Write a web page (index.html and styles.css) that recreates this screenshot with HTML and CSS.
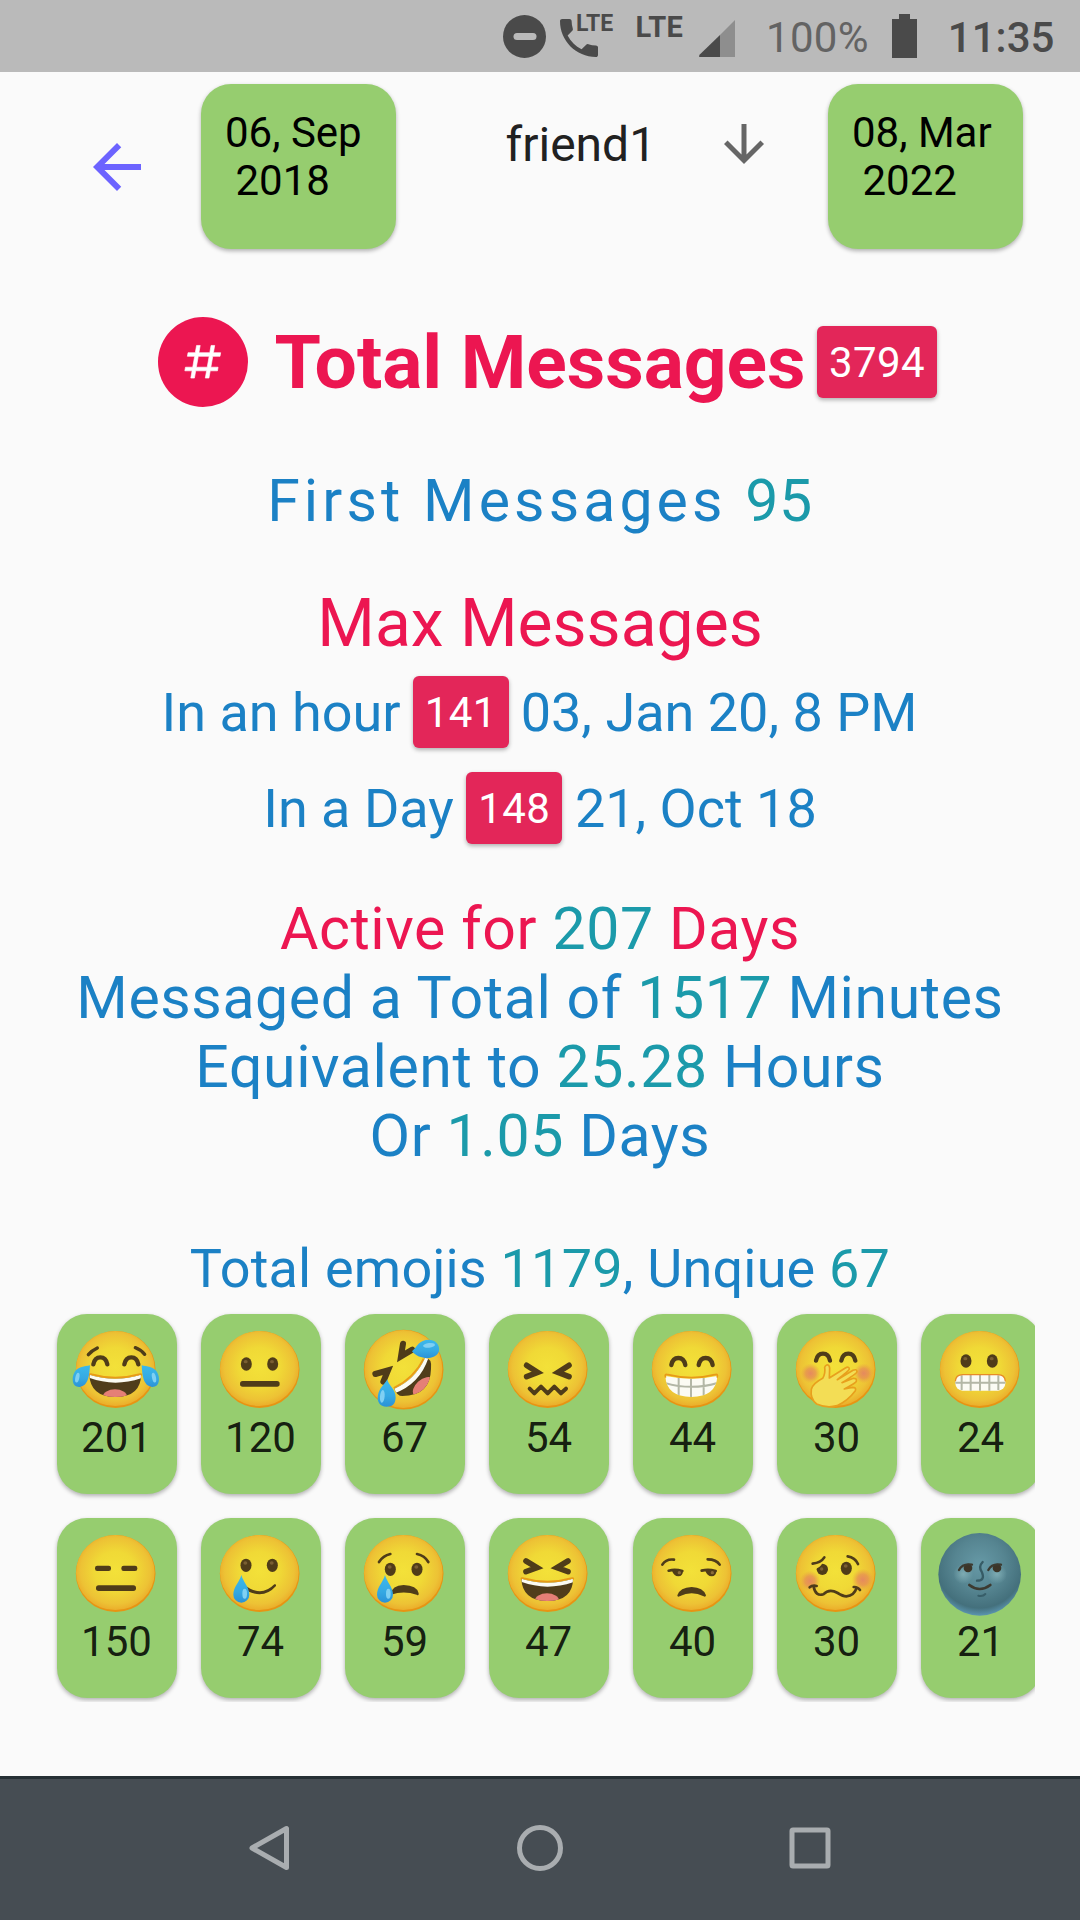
FILE: index.html
```html
<!DOCTYPE html>
<html lang="en">
<head>
<meta charset="utf-8">
<title>Chat statistics</title>
<link rel="stylesheet" href="styles.css">
</head>
<body>
<svg class="defs" width="0" height="0" aria-hidden="true">
  <defs>
    <radialGradient id="skin" cx=".5" cy=".48" r=".52">
      <stop offset="0" stop-color="#f3e139"/><stop offset=".5" stop-color="#f0d936"/><stop offset=".85" stop-color="#edc235"/><stop offset="1" stop-color="#ebae2b"/>
    </radialGradient>
    <radialGradient id="blush"><stop offset="0" stop-color="#e58661" stop-opacity=".95"/><stop offset=".5" stop-color="#e68a55" stop-opacity=".7"/><stop offset="1" stop-color="#e9a040" stop-opacity="0"/></radialGradient>
    <radialGradient id="moon" cx=".5" cy=".38" r=".62"><stop offset="0" stop-color="#6699a6"/><stop offset=".5" stop-color="#568591"/><stop offset=".85" stop-color="#44707c"/><stop offset="1" stop-color="#5b95b0"/></radialGradient>
    <radialGradient id="glow"><stop offset="0" stop-color="#86b4ba" stop-opacity=".8"/><stop offset="1" stop-color="#86b4ba" stop-opacity="0"/></radialGradient>
    <linearGradient id="water" x1="0" y1="0" x2="0" y2="1"><stop offset="0" stop-color="#3bb9ec"/><stop offset=".6" stop-color="#35a9e3"/><stop offset="1" stop-color="#2a92d8"/></linearGradient>
    <clipPath id="laughClip"><path d="M97 182Q175 206 252 182Q252 248 175 249Q100 248 97 182Z"/></clipPath>
    <clipPath id="rollClip"><path d="M148 224Q210 198 240 132Q262 132 258 165Q256 246 172 246Q156 246 148 224Z"/></clipPath>
    <clipPath id="grinClip"><path d="M97 186Q176 202 253 186Q250 248 175 249Q100 248 97 186Z"/></clipPath>
    <g id="face"><ellipse cx="176" cy="166.500" rx="119.500" ry="115.500" fill="#e79413"/><ellipse cx="175" cy="163.500" rx="118" ry="112.500" fill="url(#skin)"/></g>
    <g id="eye"><ellipse rx="16.500" ry="20" fill="#4f3c19"/><ellipse cx="-2" cy="-7" rx="6" ry="5" fill="#7a5f33"/></g>
    <path id="happyEye" d="M-21 12Q-17 -9 0 -9Q17 -9 21 12" fill="none" stroke="#4f3c19" stroke-width="13" stroke-linecap="round"/>
    <g id="drop"><path d="M0 0C-5 20-24 36-24 59A24 24 0 0 0 24 59C24 36 5 20 0 0Z" fill="url(#water)"/><ellipse cx="10" cy="56" rx="7" ry="15" fill="#7fd0f3"/></g>
    <g id="laugh">
      <path d="M97 182Q175 206 252 182Q252 248 175 249Q100 248 97 182Z" fill="#503d1b"/>
      <g clip-path="url(#laughClip)"><path d="M92 175H260V190Q175 222 92 190Z" fill="#fbfbf3"/><ellipse cx="174" cy="247" rx="36" ry="21" fill="#e57f76"/></g>
      <path d="M97 183Q97 178 105 181Q175 201 245 181Q253 178 253 183" fill="none" stroke="#e89a17" stroke-width="5" stroke-linecap="round"/>
    </g>
  </defs>
</svg>

<header class="status">
  <svg class="dnd" viewBox="0 0 43 43"><circle cx="21.500" cy="21.500" r="21.500" fill="#4a4a4a"/><rect x="10.500" y="18" width="23" height="7" rx="3.500" fill="#bababa"/></svg>
  <span class="call"><svg class="phone" viewBox="3 3 18 18"><path fill="#4a4a4a" d="M6.620 10.790c1.440 2.830 3.760 5.140 6.590 6.590l2.200-2.200c.27-.27.67-.36 1.020-.24 1.120.37 2.330.57 3.570.57.55 0 1 .45 1 1V20c0 .55-.45 1-1 1-9.390 0-17-7.610-17-17 0-.55.45-1 1-1h3.500c.55 0 1 .45 1 1 0 1.250.2 2.450.57 3.570.11.35.03.74-.25 1.020l-2.200 2.200z"/></svg><b class="lte-small">LTE</b></span>
  <b class="lte">LTE</b>
  <svg class="signal" viewBox="0 0 36 37"><path d="M36 0V37H21V15Z" fill="#8e8e8e"/><path d="M21 15V37H1.500Q-1 37 .8 34.500Z" fill="#4a4a4a"/></svg>
  <span class="percent">100%</span>
  <svg class="battery" viewBox="0 0 25 44"><path d="M7 0H18V5H25V44H0V5H7Z" fill="#4a4a4a"/></svg>
  <time class="clock">11:35</time>
</header>

<main>
  <div class="toolbar">
    <svg class="back" viewBox="0 0 24 24"><path fill="#6c63ff" d="M20 11H7.830l5.590-5.590L12 4l-8 8 8 8 1.410-1.410L7.830 13H20v-2z"/></svg>
    <div class="date">06, Sep
 2018</div>
    <div class="picker"><span>friend1</span><svg class="down" viewBox="0 0 24 24"><path fill="#666" d="M20 12l-1.410-1.410L13 16.170V4h-2v12.170l-5.580-5.590L4 12l8 8 8-8z"/></svg></div>
    <div class="date">08, Mar
 2022</div>
  </div>

  <section class="total">
    <span class="hash"><svg viewBox="0 0 24 24"><path fill="#fff" stroke="#fff" stroke-width=".35" stroke-linejoin="round" d="M5.410 21L6.120 17H2.120L2.470 15H6.470L7.530 9H3.530L3.880 7H7.880L8.590 3H10.590L9.880 7H15.880L16.590 3H18.590L17.880 7H21.880L21.530 9H17.530L16.470 15H20.470L20.120 17H16.120L15.410 21H13.410L14.120 17H8.120L7.410 21H5.410M9.530 9L8.470 15H14.470L15.530 9H9.530Z"/></svg></span>
    <h1>Total Messages</h1>
    <span class="badge">3794</span>
  </section>

  <p class="first"><span class="wide">First Messages </span><em>95</em></p>
  <h2>Max Messages</h2>
  <div class="max"><span>In an hour</span><span class="badge">141</span><span>03, Jan 20, 8 PM</span></div>
  <div class="max"><span>In a Day</span><span class="badge">148</span><span>21, Oct 18</span></div>

  <section class="active">
    <p class="red">Active for <em>207</em> Days</p>
    <p>Messaged a Total of <em>1517</em> Minutes</p>
    <p>Equivalent to <em>25.28</em> Hours</p>
    <p>Or <em>1.05</em> Days</p>
  </section>

  <p class="emoji-total">Total emojis <em>1179</em>, Unqiue <em>67</em></p>

  <section class="emojis">
    <article class="card"><svg viewBox="0 0 360 300"><use href="#face"/><g fill="none" stroke="#4f3c19" stroke-width="10" stroke-linecap="round"><path d="M94 122Q104 110 121 102M235 101Q250 106 263 121"/></g><use href="#happyEye" x="130" y="139"/><use href="#happyEye" x="223" y="139"/><use href="#laugh"/><path d="M99 154C97 182 95 216 68 219C44 220 43 190 53 174C64 157 82 158 99 154Z" fill="url(#water)"/><ellipse cx="61" cy="191" rx="6" ry="15" transform="rotate(12 61 191)" fill="#7fd0f3"/><path d="M254 154C256 182 258 216 285 219C309 220 310 190 300 174C289 157 271 158 254 154Z" fill="url(#water)"/><ellipse cx="291" cy="191" rx="6" ry="15" transform="rotate(-12 291 191)" fill="#7fd0f3"/></svg><span>201</span></article>
    <article class="card"><svg viewBox="0 0 360 300"><use href="#face"/><use href="#eye" x="136" y="150"/><use href="#eye" x="215" y="150"/><rect x="117" y="201" width="119" height="17" rx="8" fill="#4f3c19"/></svg><span>120</span></article>
    <article class="card"><svg viewBox="0 0 360 300"><circle cx="176" cy="167" r="119.500" fill="#e79413"/><circle cx="175" cy="165" r="117" fill="url(#skin)"/><g fill="none" stroke="#4f3c19" stroke-width="18" stroke-linecap="round" stroke-linejoin="miter"><path d="M174 89L168 127L202 107M91 180L129 169L115 203"/></g><path d="M148 224Q210 198 240 132Q262 132 258 165Q256 246 172 246Q156 246 148 224Z" fill="#503d1b"/><g clip-path="url(#rollClip)"><path d="M140 222Q206 194 234 128L250 133Q224 210 149 238Z" fill="#fbfbf3"/><ellipse cx="236" cy="220" rx="38" ry="24" transform="rotate(-42 236 220)" fill="#e57f76"/></g><path d="M146 222Q206 194 236 134" fill="none" stroke="#e89a17" stroke-width="5"/><path d="M201 112C216 98 222 77 252 77C279 78 288 103 279 118C268 137 223 139 201 112Z" fill="url(#water)"/><ellipse cx="252" cy="94" rx="18" ry="7" transform="rotate(-6 252 94)" fill="#7fd0f3"/><path d="M127 196C130 214 152 225 152 251C151 269 143 278 125 278C104 278 95 262 99 243C103 222 118 212 127 196Z" fill="url(#water)"/><ellipse cx="112" cy="247" rx="7" ry="19" transform="rotate(5 112 247)" fill="#7fd0f3"/></svg><span>67</span></article>
    <article class="card"><svg viewBox="0 0 360 300"><use href="#face"/><g fill="none" stroke="#4f3c19" stroke-linecap="round"><path stroke-width="17" d="M113 154L146 175L113 188M240 154L207 175L240 188"/><path stroke-width="12" stroke-linejoin="round" d="M122 224L136 238L156 218L176 238L196 218L216 238L231 224"/></g></svg><span>54</span></article>
    <article class="card"><svg viewBox="0 0 360 300"><use href="#face"/><use href="#happyEye" x="136" y="141"/><use href="#happyEye" x="218" y="141"/><path d="M97 186Q176 202 253 186Q250 248 175 249Q100 248 97 186Z" fill="#fbfbf3"/><g clip-path="url(#grinClip)" fill="none" stroke="#b3b7a6" stroke-width="6"><path d="M137 180V250M174 180V250M212 180V250M90 205Q176 232 260 205"/></g><path d="M98 191Q93 178 105 182Q176 200 245 182Q257 178 252 191" fill="none" stroke="#e89a17" stroke-width="5"/></svg><span>44</span></article>
    <article class="card"><svg viewBox="0 0 360 300"><use href="#face"/><use href="#happyEye" x="138" y="128"/><use href="#happyEye" x="214" y="128"/><circle cx="101" cy="178" r="30" fill="url(#blush)"/><circle cx="260" cy="178" r="30" fill="url(#blush)"/><path d="M149 153Q157 151 158 163L157 192L205 162Q216 156 217 165Q217 169 181 197L228 169Q239 164 240 173Q240 178 195 206L229 193Q240 192 238 202Q236 207 202 225L226 220Q239 220 235 230Q214 259 180 275Q150 284 119 270Q99 254 103 226Q108 208 137 193Q146 178 143 160Q144 155 149 153Z" fill="#f3dd55" stroke="#e8a01d" stroke-width="5" stroke-linejoin="round"/></svg><span>30</span></article>
    <article class="card"><svg viewBox="0 0 360 300"><use href="#face"/><use href="#eye" x="135" y="141"/><use href="#eye" x="214" y="141"/><rect x="103" y="182" width="150" height="48" rx="22" fill="#fbfbf3"/><path d="M122 184V228M149 182V230M177 182V230M205 182V230M232 184V228M103 206H253" stroke="#b3b7a6" stroke-width="6"/><path d="M103 202Q104 182 125 182H231Q252 182 253 202" fill="none" stroke="#e78b28" stroke-width="4"/></svg><span>24</span></article>

    <article class="card"><svg viewBox="0 0 360 300"><use href="#face"/><g fill="#4f3c19"><rect x="114" y="143" width="48" height="16" rx="7"/><rect x="193" y="143" width="48" height="16" rx="7"/><rect x="117" y="202" width="120" height="17" rx="8"/></g></svg><span>150</span></article>
    <article class="card"><svg viewBox="0 0 360 300"><use href="#face"/><use href="#eye" x="135" y="142"/><use href="#eye" x="214" y="142"/><path d="M130 200Q180 240 220 199Q226 197 225 204Q190 244 138 219Z" fill="#4f3c19"/><use href="#drop" x="121" y="171"/></svg><span>74</span></article>
    <article class="card"><svg viewBox="0 0 360 300"><use href="#face"/><path d="M102 132Q114 113 136 108M216 108Q239 113 250 132" fill="none" stroke="#4f3c19" stroke-width="8" stroke-linecap="round"/><use href="#eye" x="136" y="154"/><use href="#eye" x="216" y="154"/><path d="M138 228Q140 202 176 201Q216 202 221 226Q222 235 215 230Q176 217 138 230Z" fill="#4f3c19"/><use href="#drop" x="120" y="171"/></svg><span>59</span></article>
    <article class="card"><svg viewBox="0 0 360 300"><use href="#face"/><path d="M111 129L144 149L111 161M237 129L204 149L237 161" fill="none" stroke="#4f3c19" stroke-width="17" stroke-linecap="round"/><use href="#laugh"/></svg><span>47</span></article>
    <article class="card"><svg viewBox="0 0 360 300"><use href="#face"/><g fill="none" stroke="#4f3c19" stroke-width="8" stroke-linecap="round"><path d="M88 140Q99 122 123 125M224 124Q250 124 260 140M107 158Q126 153 148 159M206 158Q226 153 248 159"/></g><path d="M117 158H150Q150 174 136 175Q122 174 117 158Z" fill="#4f3c19"/><path d="M217 158H250Q250 174 236 175Q222 174 217 158Z" fill="#4f3c19"/><circle cx="139" cy="164" r="5" fill="#8a6c3a"/><circle cx="238" cy="164" r="5" fill="#8a6c3a"/><path d="M133 232Q141 208 176 207Q211 208 219 232Q218 238 212 235Q176 217 140 235Q133 238 133 232Z" fill="#4f3c19"/></svg><span>40</span></article>
    <article class="card"><svg viewBox="0 0 360 300"><use href="#face"/><circle cx="99" cy="189" r="31" fill="url(#blush)"/><circle cx="257" cy="185" r="33" fill="url(#blush)"/><ellipse cx="136" cy="154" rx="17" ry="17" fill="#4f3c19"/><path d="M114 153Q130 148 137 134H110Z" fill="#efd536"/><ellipse cx="134" cy="153" rx="5" ry="5" fill="#7a5f33"/><use href="#eye" x="208" y="151"/><g fill="none" stroke="#4f3c19" stroke-width="8" stroke-linecap="round"><path d="M107 137Q132 134 142 118M212 115Q234 118 243 138M98 208Q106 201 119 204M110 206Q116 236 139 229Q157 210 182 225Q198 235 208 235Q232 233 239 209M230 207Q242 206 249 216"/></g></svg><span>30</span></article>
    <article class="card"><svg viewBox="0 0 360 300"><circle cx="176" cy="169" r="124" fill="url(#moon)"/><circle cx="127" cy="168" r="30" fill="url(#glow)"/><circle cx="228" cy="168" r="30" fill="url(#glow)"/><circle cx="141" cy="150" r="13" fill="#3c3528"/><circle cx="228" cy="150" r="13" fill="#3c3528"/><g fill="none" stroke="#3c3a30" stroke-width="7" stroke-linecap="round"><path d="M114 156Q125 135 153 140M202 156Q213 135 240 140"/><path d="M145 201Q176 225 208 201" stroke-width="8"/></g><path d="M185 132Q171 146 183 163Q193 188 168 188" fill="none" stroke="#365b65" stroke-width="7" stroke-linecap="round"/><path d="M172 233Q186 236 193 228" fill="none" stroke="#375e69" stroke-width="6" stroke-linecap="round"/></svg><span>21</span></article>
  </section>
</main>

<nav>
  <svg viewBox="0 0 48 48"><path d="M40.500 4.500V43.500L6 24Z"/></svg>
  <svg viewBox="0 0 48 48"><circle cx="24" cy="24" r="20.500"/></svg>
  <svg viewBox="0 0 48 48"><rect x="6" y="6" width="36" height="36" rx="1"/></svg>
</nav>
</body>
</html>
```
FILE: styles.css
```css
* { box-sizing: border-box; }

body {
  margin: 0;
  width: 1080px;
  height: 1920px;
  display: flex;
  flex-direction: column;
  overflow: hidden;
  background: #fafafa;
  font-family: Roboto, sans-serif;
  color: #1b81c5;
}

h1, h2, p { margin: 0; font-weight: 400; }
em { font-style: normal; color: #1b9aaa; }
svg { display: block; flex: none; }
.defs { position: absolute; }

/* Status bar */
.status {
  height: 72px;
  flex: none;
  display: flex;
  align-items: flex-start;
  padding-left: 503px;
  background: #bababa;
  color: #4a4a4a;
}
.dnd { width: 43px; height: 43px; margin-top: 15px; }
.call { display: flex; align-items: flex-start; margin: 16px 0 0 14px; }
.phone { width: 38px; height: 38px; margin-top: 3px; }
.lte-small { font-size: 23px; line-height: 16px; margin-left: -22px; letter-spacing: .1px; }
.lte { font-size: 29px; line-height: 21px; margin: 17px 0 0 22px; letter-spacing: .3px; }
.signal { width: 36px; height: 37px; margin: 20px 0 0 16px; }
.percent { font-size: 42px; line-height: 44px; margin: 16px 0 0 31px; letter-spacing: .3px; color: #636363; }
.battery { width: 25px; height: 44px; margin: 14px 0 0 23px; }
.clock { font-size: 42px; font-weight: 500; line-height: 44px; margin: 16px 0 0 31px; }

main { flex: 1; }

/* Date range and chat picker */
.toolbar {
  display: flex;
  align-items: flex-start;
  padding: 12px 57px 0 81px;
}
.back { width: 72px; height: 72px; margin: 47px 48px 0 0; }
.date {
  width: 195px;
  height: 165px;
  padding: 25px 24px 0;
  border-radius: 30px;
  background: #96cd6f;
  box-shadow: 0 2px 4px rgba(0, 0, 0, .3);
  color: #000;
  font-size: 42px;
  line-height: 48px;
  white-space: pre;
}
.picker {
  flex: 1;
  display: flex;
  align-items: center;
  justify-content: space-between;
  height: 60px;
  margin-top: 30px;
  padding: 0 54px 0 109.500px;
  font-size: 48px;
  color: #212121;
}
.down { width: 60px; height: 60px; }

/* Totals */
.badge {
  height: 72px;
  padding: 1px 12px 0;
  border-radius: 6px;
  background: #e32659;
  box-shadow: 0 2px 4px rgba(0, 0, 0, .3);
  color: #fff;
  font-size: 42px;
  line-height: 72px;
  letter-spacing: .4px;
}
.total {
  display: flex;
  align-items: center;
  height: 90px;
  margin: 68px 0 0 157.500px;
  color: #ec1651;
}
.hash {
  display: grid;
  place-items: center;
  width: 90px;
  height: 90px;
  margin-right: 27px;
  border-radius: 50%;
  background: #ec1651;
}
.hash svg { width: 43.500px; height: 43.500px; }
h1 { font-size: 75px; font-weight: 700; margin-right: 11.500px; letter-spacing: -.05px; }
.first {
  margin-top: 59px;
  text-align: center;
  font-size: 59px;
  line-height: 70px;
}
.first em { letter-spacing: .6px; }
.wide { letter-spacing: 4.100px; }
h2 {
  margin-top: 48px;
  text-align: center;
  font-size: 66px;
  line-height: 80px;
  color: #ec1651;
}
.max {
  display: flex;
  justify-content: center;
  align-items: center;
  gap: 12.500px;
  height: 72px;
  font-size: 54px;
}
h2 + .max { margin: 12px 0 24px; gap: 12px; padding-right: 1px; }
.active {
  margin-top: 49.500px;
  text-align: center;
  font-size: 59px;
  line-height: 69px;
  letter-spacing: .6px;
}
.red { color: #ec1651; }
.emoji-total {
  margin-top: 67px;
  text-align: center;
  font-size: 54px;
  line-height: 64px;
  letter-spacing: .2px;
}

.emojis {
  display: grid;
  grid-template-columns: repeat(7, 120px);
  grid-auto-rows: 180px;
  gap: 24px;
  width: 990px;
  height: 400px;
  margin: 1px 0 0 45px;
  padding: 12px;
  overflow: hidden;
}
.card {
  border-radius: 30px;
  background: #96cd6f;
  box-shadow: 0 2px 4px rgba(0, 0, 0, .3);
  color: rgba(0, 0, 0, .87);
  text-align: center;
  font-size: 42px;
}
.card svg { width: 120px; height: 100px; }
.card span { display: block; padding-right: 1px; line-height: 48px; }

/* System navigation */
nav {
  flex: none;
  display: flex;
  justify-content: center;
  align-items: center;
  gap: 222px;
  height: 144px;
  padding-bottom: 3px;
  border-top: 3px solid #263035;
  background: #464d53;
}
nav svg { width: 48px; height: 48px; }
nav path, nav circle, nav rect { fill: none; stroke: #a9adb0; stroke-width: 5; stroke-linejoin: round; }
```
